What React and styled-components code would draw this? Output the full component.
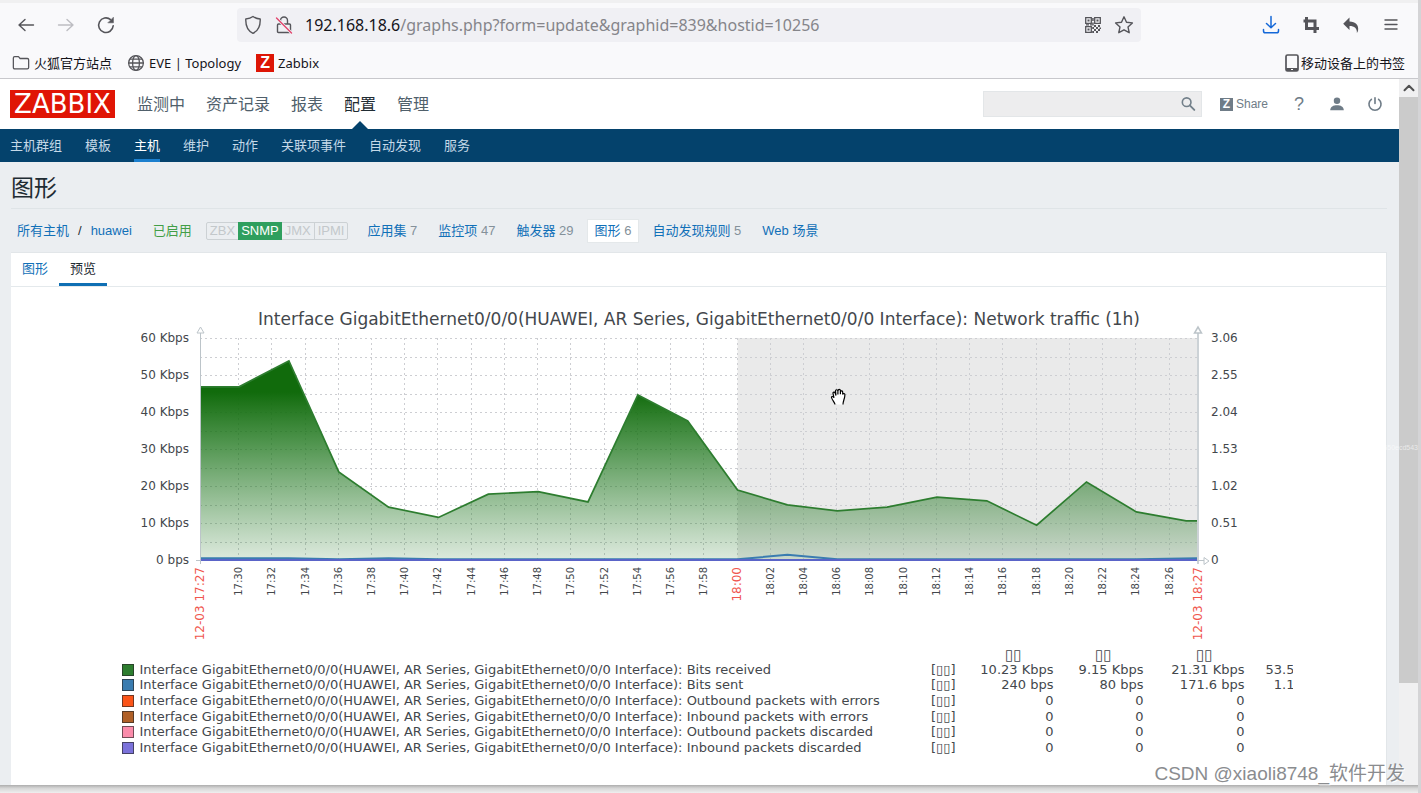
import React from "react";
import styled, { createGlobalStyle } from "styled-components";

const CJK = `"Noto Sans CJK SC", sans-serif`;

const bookmarks = [
  { label: "火狐官方站点", icon: "folder" },
  { label: "EVE | Topology", icon: "globe" },
  { label: "Zabbix", icon: "zabbix" },
];

const mainMenu = ["监测中", "资产记录", "报表", "配置", "管理"];
const subMenu = [
  "主机群组",
  "模板",
  "主机",
  "维护",
  "动作",
  "关联项事件",
  "自动发现",
  "服务",
];

const hostLinks = [
  { label: "应用集", count: 7 },
  { label: "监控项", count: 47 },
  { label: "触发器", count: 29 },
  { label: "图形", count: 6, active: true },
  { label: "自动发现规则", count: 5 },
  { label: "Web 场景" },
];

const ITEM_PREFIX =
  "Interface GigabitEthernet0/0/0(HUAWEI, AR Series, GigabitEthernet0/0/0 Interface): ";

const legend = [
  { name: "Bits received", color: "#2d7d2f", values: ["10.23 Kbps", "9.15 Kbps", "21.31 Kbps", "53.5"] },
  { name: "Bits sent", color: "#3a7cb0", values: ["240 bps", "80 bps", "171.6 bps", "1.1"] },
  { name: "Outbound packets with errors", color: "#fb5418", values: ["0", "0", "0", ""] },
  { name: "Inbound packets with errors", color: "#b06027", values: ["0", "0", "0", ""] },
  { name: "Outbound packets discarded", color: "#fb8cab", values: ["0", "0", "0", ""] },
  { name: "Inbound packets discarded", color: "#7b72da", values: ["0", "0", "0", ""] },
];

// [minutes after 17:00, Kbps]
const received = [
  [27.65, 46.8], [30, 46.8], [33, 53.8], [36, 23.8], [39, 14.3], [42, 11.5],
  [45, 17.8], [48, 18.5], [51, 15.7], [54, 44.6], [57, 37.6], [60, 18.9],
  [63, 14.9], [66, 13.3], [69, 14.3], [72, 17], [75, 16], [78, 9.4],
  [81, 21.1], [84, 13], [87, 10.6], [87.65, 10.6],
];
const sent = [
  [27.65, 0.5], [33, 0.5], [36, 0.2], [39, 0.5], [42, 0.2], [60, 0.2],
  [63, 1.4], [66, 0.2], [84, 0.2], [87.65, 0.5],
];

const LEFT = 95;
const RIGHT = 1092;
const TOP = 38;
const BOTTOM = 260;
const START = 27.65;
const px = (min) => LEFT + ((min - START) * (RIGHT - LEFT)) / 60;
const py = (kbps) => BOTTOM - (kbps * (BOTTOM - TOP)) / 60;
const toPoints = (data) => data.map(([m, v]) => `${px(m)},${py(v)}`).join(" ");

const clock = (min) => {
  const h = 17 + Math.floor(min / 60);
  return `${h}:${String(min % 60).padStart(2, "0")}`;
};

const Icon = ({ size = 20, children, ...rest }) => (
  <svg
    width={size}
    height={size}
    viewBox="0 0 20 20"
    fill="none"
    stroke="currentColor"
    strokeWidth="1.4"
    strokeLinecap="round"
    strokeLinejoin="round"
    aria-hidden="true"
    {...rest}
  >
    {children}
  </svg>
);

const BookmarkIcon = ({ type }) => {
  if (type === "zabbix") return <ZBadge>Z</ZBadge>;
  if (type === "globe")
    return (
      <Icon size={18}>
        <circle cx="10" cy="10" r="8.2" />
        <ellipse cx="10" cy="10" rx="3.8" ry="8.2" />
        <path d="M2 10h16M3.4 5.6h13.2M3.4 14.4h13.2" />
      </Icon>
    );
  return (
    <Icon size={18}>
      <path d="M1.5 4.5c0-.9.6-1.5 1.5-1.5h4.2l1.8 2h8c.9 0 1.5.6 1.5 1.5V15c0 .9-.6 1.5-1.5 1.5H3c-.9 0-1.5-.6-1.5-1.5z" />
    </Icon>
  );
};

const QrIcon = () => (
  <svg width="16" height="16" viewBox="0 0 16 16" fill="none" stroke="currentColor" strokeWidth="1.3" aria-hidden="true">
    <path d="M.7.7h5.6v5.6H.7zM9.7.7h5.6v5.6H9.7zM.7 9.7h5.6v5.6H.7z" />
    <path
      fill="currentColor"
      stroke="none"
      d="M2.5 2.5h2v2h-2zM11.5 2.5h2v2h-2zM2.5 11.5h2v2h-2zM7.2 1h1.5v3H7.2zM7.2 5.5h1.5v3H7.2zM1 7.2h3v1.4H1zM5 7.2h2v1.4H5zM9 8h2v2H9zM13 8h2v2h-2zM11 10h2v2h-2zM7.2 10h1.8v2H7.2zM9 12h2v2H9zM13 12h2v2h-2zM11 14h2v2h-2zM7.2 14h1.8v2H7.2zM14.5 10.5H16v1.5h-1.5z"
    />
  </svg>
);

const BrowserBar = () => (
  <Chrome>
    <Toolbar>
      <NavButtons>
        <ToolButton aria-label="后退">
          <Icon><path d="M17.5 10H3M9 4.5L3 10l6 5.500" /></Icon>
        </ToolButton>
        <ToolButton aria-label="前进" $color="#bdbdc2">
          <Icon><path d="M2.500 10H17M11 4.500l6 5.500-6 5.500" /></Icon>
        </ToolButton>
        <ToolButton aria-label="刷新">
          <Icon strokeWidth="1.6">
            <path d="M17.2 10.8A7.3 7.3 0 1 1 14.6 4.6" />
            <path d="M17.4 2.6v5.2h-5.2z" fill="currentColor" strokeWidth="0.6" />
          </Icon>
        </ToolButton>
      </NavButtons>
      <AddressBar>
        <Icon><path d="M10 1.5c2 1.6 4.5 2.3 7.2 2.5.3 6.8-2.2 11.9-7.2 14.3C5 15.9 2.500 10.800 2.800 4 5.500 3.800 8 3.100 10 1.500z" /></Icon>
        <Icon>
          <path d="M6.500 9V5.500a3.500 3.500 0 0 1 7 0V9M4.500 9h11c.6 0 1 .4 1 1v6.500c0 .6-.4 1-1 1h-11c-.6 0-1-.4-1-1V10c0-.6.4-1 1-1z" />
          <path d="M2.500 3l15 15" stroke="#f0f0f4" strokeWidth="3" />
          <path d="M2.500 3l15 15" stroke="#e2446c" />
        </Icon>
        <Url role="textbox" aria-label="地址栏" tabIndex={0}>
          <b>192.168.18.6</b>/graphs.php?form=update&amp;graphid=839&amp;hostid=10256
        </Url>
        <ToolButton aria-label="二维码" $small><QrIcon /></ToolButton>
        <ToolButton aria-label="添加书签" $small>
          <Icon><path d="M10 1.800l2.500 5.400 5.900.7-4.400 4 1.200 5.800L10 14.800l-5.200 2.900L6 11.900l-4.400-4 5.900-.7z" /></Icon>
        </ToolButton>
      </AddressBar>
      <Extensions>
        <ToolButton aria-label="下载" $color="#1468d8">
          <Icon strokeWidth="1.500"><path d="M10 1.500v11M5.500 8.500l4.500 4.300 4.500-4.300M2.500 14.500v1.400c0 1 .8 1.800 1.800 1.800h11.400c1 0 1.800-.8 1.800-1.800v-1.400" /></Icon>
        </ToolButton>
        <ToolButton aria-label="截图">
          <Icon strokeWidth="3" strokeLinecap="butt" strokeLinejoin="miter"><path d="M5.500 2v11.500H18M2.500 6h11.500V18" /></Icon>
        </ToolButton>
        <ToolButton aria-label="撤销">
          <Icon stroke="none"><path fill="currentColor" d="M8.500 2.500v4c6 0 9.500 3.500 8.600 8.800-.2 1.200-.6 2-1.200 2.700.3-4.700-2.400-7-7.400-7v4L2.200 8.800z" /></Icon>
        </ToolButton>
        <ToolButton aria-label="菜单">
          <Icon><path d="M4 5h12M4 9.500h12M4 14h12" /></Icon>
        </ToolButton>
      </Extensions>
    </Toolbar>
    <BookmarkBar>
      {bookmarks.map((b) => (
        <Bookmark href="#" key={b.label}>
          <BookmarkIcon type={b.icon} />
          {b.label}
        </Bookmark>
      ))}
      <MobileBookmark href="#">
        <svg width="14" height="18" viewBox="0 0 14 18" aria-hidden="true">
          <rect x="1" y="1" width="12" height="16" rx="1.500" fill="none" stroke="#55555a" strokeWidth="1.700" />
          <path d="M1 14h12v3H1z" fill="#55555a" />
          <path d="M6 15.500h2" stroke="#fff" />
        </svg>
        移动设备上的书签
      </MobileBookmark>
    </BookmarkBar>
  </Chrome>
);

const Header = () => (
  <TopBar>
    <Logo href="#">ZABBIX</Logo>
    <MainNav>
      {mainMenu.map((item) => (
        <MainLink href="#" key={item} $active={item === "配置"}>
          {item}
        </MainLink>
      ))}
    </MainNav>
    <Search>
      <SearchInput type="text" aria-label="搜索" />
      <SearchButton aria-label="搜索">
        <Icon size={18} strokeWidth="1.800">
          <circle cx="8.500" cy="8" r="4.800" />
          <path d="M12 11.500l5 5" strokeWidth="2.200" />
        </Icon>
      </SearchButton>
    </Search>
    <Share href="#">
      <ZBadge $share>Z</ZBadge>
      Share
    </Share>
    <UserLinks>
      <UserLink href="#" aria-label="帮助">?</UserLink>
      <UserLink href="#" aria-label="用户">
        <Icon size={18} stroke="none">
          <circle cx="10" cy="6.500" r="3.600" fill="currentColor" />
          <path d="M2.500 17c0-4 3.500-5.500 7.500-5.500s7.500 1.500 7.500 5.500z" fill="currentColor" />
        </Icon>
      </UserLink>
      <UserLink href="#" aria-label="退出">
        <Icon size={18} strokeWidth="1.800"><path d="M10 3v6.500M6 4.800a6.700 6.700 0 1 0 8 0" /></Icon>
      </UserLink>
    </UserLinks>
  </TopBar>
);

const TrafficChart = () => {
  const minutes = [];
  for (let m = 30; m <= 86; m += 2) minutes.push(m);
  const steps = Array.from({ length: 13 }, (_, i) => i * 5);
  const left = ["0 bps", "10 Kbps", "20 Kbps", "30 Kbps", "40 Kbps", "50 Kbps", "60 Kbps"];
  const right = ["0", "0.51", "1.02", "1.53", "2.04", "2.55", "3.06"];
  return (
    <Chart viewBox="0 0 1188 348" role="img" aria-label="Network traffic">
      <defs>
        <linearGradient id="area" gradientUnits="userSpaceOnUse" x1="0" y1="92" x2="0" y2={BOTTOM}>
          <stop offset="0" stopColor="#116b0c" />
          <stop offset="0.3" stopColor="#1d761b" stopOpacity="0.78" />
          <stop offset="1" stopColor="#2d7d2f" stopOpacity="0.16" />
        </linearGradient>
      </defs>
      <text x="594" y="25" fontSize="17" textAnchor="middle">
        {ITEM_PREFIX}Network traffic (1h)
      </text>
      <rect x={px(60)} y={TOP} width={RIGHT - px(60)} height={BOTTOM - TOP} fill="#eaeaea" />
      <g stroke="#cdced2" strokeDasharray="2 3">
        {steps.map((s) => (
          <line key={s} x1={LEFT} x2={RIGHT} y1={Math.round(py(s)) + 0.5} y2={Math.round(py(s)) + 0.5} />
        ))}
        {minutes.map((m) => (
          <line key={m} x1={Math.round(px(m)) - 0.5} x2={Math.round(px(m)) - 0.5} y1={TOP} y2={BOTTOM} />
        ))}
      </g>
      <polygon fill="url(#area)" points={`${LEFT},${BOTTOM} ${toPoints(received)} ${RIGHT},${BOTTOM}`} />
      <polyline fill="none" stroke="#2d7d2f" strokeWidth="1.700" points={toPoints(received)} />
      <polyline fill="none" stroke="#3a7cb0" strokeWidth="2" points={toPoints(sent)} />
      <line x1={LEFT} x2={RIGHT} y1={BOTTOM} y2={BOTTOM} stroke="#5a64c8" strokeWidth="2" />
      <g fill="#fff" stroke="#bcc4c9">
        <path d="M95.500 264V33M92 33h7l-3.500-6z" />
        <path d="M1093 264V33M1089.500 33h7l-3.500-6z" strokeWidth="1.500" />
        <path d="M91 260.500h4M1092 260.500h7M1099 257.500v7l5-3.500z" />
      </g>
      <g fontSize="12">
        {left.map((label, i) => (
          <text key={label} x="84" y={py(i * 10) + 4} textAnchor="end">{label}</text>
        ))}
        {right.map((label, i) => (
          <text key={label} x="1106" y={py(i * 10) + 4}>{label}</text>
        ))}
      </g>
      {minutes.map((m) => (
        <TimeLabel key={m} $major={m === 60} transform={`translate(${Math.round(px(m)) + 3} 267) rotate(-90)`}>
          {clock(m)}
        </TimeLabel>
      ))}
      <TimeLabel $major transform="translate(99 267) rotate(-90)">12-03 17:27</TimeLabel>
      <TimeLabel $major transform="translate(1097 267) rotate(-90)">12-03 18:27</TimeLabel>
    </Chart>
  );
};

const Legend = () => (
  <LegendClip>
    <LegendTable>
      <colgroup>
        <col width="808" />
        <col width="26" />
        <col width="98" />
        <col width="90" />
        <col width="101" />
        <col width="50" />
      </colgroup>
      <thead>
        <tr>
          <th />
          <th />
          <th>▯▯</th>
          <th>▯▯</th>
          <th>▯▯</th>
          <th />
        </tr>
      </thead>
      <tbody>
        {legend.map((row) => (
          <tr key={row.name}>
            <td>
              <ItemName>
                <Swatch $color={row.color} />
                {ITEM_PREFIX}
                {row.name}
              </ItemName>
            </td>
            <td>[▯▯]</td>
            {row.values.map((v, i) => (
              <td key={i}>{v}</td>
            ))}
          </tr>
        ))}
      </tbody>
    </LegendTable>
  </LegendClip>
);

// open hand shown while hovering over the graph
const HandCursor = () => (
  <Hand width="18" height="18" viewBox="0 0 18 18" aria-hidden="true">
    <path
      d="M5 16.500c0-2-3-4.500-3.500-7 0-1.300 1.500-1.500 2.500.3L3 5.500C2.700 4 4.600 3.500 5.200 5l.6 1.500L5.500 3c0-1.600 2.200-1.700 2.400 0L8.200 2c.3-1.300 2.100-1 2.200.3l.2 1.200c.5-1.200 2-.8 2.100.6v2c.5-1.200 2.200-1 2.200.5 0 4-1.900 6-1.900 9.900z"
      fill="#fff"
    />
    <path
      d="M5 16.500c0-2-3-4.500-3.500-7 0-1.300 1.500-1.500 2.500.3L3 5.500C2.700 4 4.600 3.500 5.200 5l.8 2.500L5.500 3c0-1.600 2.200-1.700 2.400 0v3.500M8 3c.2-2 2.300-2 2.400-.3v3.500M10.600 3.500c.5-1.200 2-.8 2.100.6v2.500c.5-1.600 2.200-1.400 2.200.1 0 4-1.900 6-1.900 9.800"
      fill="none"
      stroke="#000"
      strokeWidth="1.200"
    />
  </Hand>
);

const App = () => {
  return (
    <Window>
      <GlobalStyle />
      <BrowserBar />
      <Viewport>
        <Page>
          <Header />
          <SubNav>
            {subMenu.map((item) => (
              <SubLink href="#" key={item} $active={item === "主机"}>
                {item}
              </SubLink>
            ))}
          </SubNav>
          <Main>
            <Title>图形</Title>
            <HostBar>
              <HostPath>
                <a href="#">所有主机</a>
                <span>/</span>
                <a href="#">huawei</a>
              </HostPath>
              <Enabled>已启用</Enabled>
              <Interfaces>
                <Interface>ZBX</Interface>
                <Interface $on>SNMP</Interface>
                <Interface>JMX</Interface>
                <Interface $divided>IPMI</Interface>
              </Interfaces>
              {hostLinks.map((link) => (
                <HostLink href="#" key={link.label} $active={link.active}>
                  {link.label}
                  {link.count && <Count> {link.count}</Count>}
                </HostLink>
              ))}
            </HostBar>
            <Panel>
              <Tabs role="tablist">
                <Tab role="tab" aria-selected="false">图形</Tab>
                <Tab role="tab" aria-selected="true" $active>预览</Tab>
              </Tabs>
              <GraphBox>
                <TrafficChart />
                <Legend />
                <HandCursor />
              </GraphBox>
            </Panel>
          </Main>
        </Page>
        <Scrollbar>
          <Icon size={18} strokeWidth="2.200" stroke="#505050"><path d="M5 12.500l5-5 5 5" /></Icon>
          <Thumb />
        </Scrollbar>
        <SideMark>650ecd543</SideMark>
      </Viewport>
      <BottomEdge />
      <Watermark>CSDN @xiaoli8748_软件开发</Watermark>
    </Window>
  );
};

export default App;

const GlobalStyle = createGlobalStyle`
  * {
    box-sizing: border-box;
  }
  body {
    margin: 0;
    background: #fff;
    font-family: "Liberation Sans", ${CJK};
    font-size: 13px;
    color: #1f2c33;
  }
  a {
    color: #1170b8;
    text-decoration: none;
  }
  button {
    border: 0;
    padding: 0;
    background: none;
    color: inherit;
    font: inherit;
  }
  svg {
    flex: none;
    display: block;
  }
`;

const Window = styled.div`
  position: relative;
  height: 100vh;
  display: flex;
  flex-direction: column;
  overflow: hidden;
  border-right: 3px solid #d4d4d6;
`;

const Chrome = styled.div`
  flex: none;
  background: #f9f9fb;
  border-top: 3px solid #f0f0f1;
  border-bottom: 1px solid #c8c8cc;
  font-family: "Noto Sans", ${CJK};
  color: #55555a;
`;

const Toolbar = styled.div`
  display: flex;
  align-items: center;
  height: 44px;
`;

const NavButtons = styled.div`
  display: flex;
  gap: 20px;
  width: 237px;
  padding-left: 16px;
`;

const ToolButton = styled.button`
  display: flex;
  align-items: center;
  justify-content: center;
  width: ${(p) => (p.$small ? "31px" : "20px")};
  height: 20px;
  color: ${(p) => p.$color || "#55555a"};
`;

const AddressBar = styled.div`
  flex: 1;
  display: flex;
  align-items: center;
  gap: 11px;
  height: 34px;
  padding: 0 2px 0 6px;
  border-radius: 4px;
  background: #f0f0f4;

  button + button {
    margin-left: -11px;
  }
`;

const Url = styled.div`
  flex: 1;
  font-size: 16px;
  line-height: 22px;
  color: #85858a;
  white-space: nowrap;
  overflow: hidden;

  b {
    font-weight: 400;
    color: #15141a;
  }
`;

const Extensions = styled.div`
  display: flex;
  justify-content: flex-end;
  gap: 20px;
  width: 277px;
  padding-right: 17px;
`;

const BookmarkBar = styled.div`
  display: flex;
  align-items: center;
  gap: 15px;
  height: 31px;
  padding: 0 13px 0 12px;
`;

const Bookmark = styled.a`
  display: flex;
  align-items: center;
  gap: 4px;
  font-size: 13px;
  line-height: 20px;
  color: #15141a;

  svg {
    color: #55555a;
  }
`;

const MobileBookmark = styled(Bookmark)`
  gap: 2px;
  margin-left: auto;
`;

const ZBadge = styled.span`
  display: flex;
  align-items: center;
  justify-content: center;
  width: ${(p) => (p.$share ? "13px" : "18px")};
  height: ${(p) => (p.$share ? "13px" : "18px")};
  background: ${(p) => (p.$share ? "#6f7c87" : "#dd1505")};
  color: #fff;
  font: bold ${(p) => (p.$share ? "12px" : "16px")} "Liberation Sans", sans-serif;
`;

const Viewport = styled.div`
  position: relative;
  flex: 1;
  min-height: 0;
  display: flex;
`;

const Page = styled.div`
  flex: 1;
  display: flex;
  flex-direction: column;
  overflow: hidden;
  background: #ebeef1;
`;

const TopBar = styled.header`
  flex: none;
  display: flex;
  align-items: center;
  height: 50px;
  padding: 0 15px 0 10px;
  background: #fff;
`;

const Logo = styled.a`
  width: 105px;
  height: 28px;
  background: #e01505;
  color: #fff;
  font-family: "DejaVu Sans", sans-serif;
  font-size: 26px;
  line-height: 28px;
  text-align: center;
`;

const MainNav = styled.nav`
  flex: 1;
  display: flex;
  gap: 21px;
  padding-left: 22px;
`;

const MainLink = styled.a`
  position: relative;
  padding-top: 1px;
  font-size: 16px;
  line-height: 49px;
  color: ${(p) => (p.$active ? "#1f2c33" : "#50606b")};

  &::after {
    content: "";
    display: ${(p) => (p.$active ? "block" : "none")};
    position: absolute;
    left: 50%;
    bottom: 0;
    margin-left: -8px;
    border: 8px solid transparent;
    border-top: 0;
    border-bottom-color: #04426c;
  }
`;

const Search = styled.div`
  display: flex;
  width: 219px;
  height: 26px;
  background: #ededee;
  border: 1px solid #e3e6e8;
`;

const SearchInput = styled.input`
  flex: 1;
  min-width: 0;
  border: 0;
  padding: 0 6px;
  background: none;
  font-size: 13px;
`;

const SearchButton = styled.button`
  display: flex;
  align-items: center;
  justify-content: center;
  width: 26px;
  color: #73808a;
`;

const Share = styled.a`
  display: flex;
  align-items: center;
  gap: 3px;
  margin-left: 18px;
  font-size: 12px;
  color: #6f7c87;
`;

const UserLinks = styled.div`
  display: flex;
  gap: 20px;
  margin-left: 22px;
`;

const UserLink = styled.a`
  display: flex;
  align-items: center;
  justify-content: center;
  width: 18px;
  height: 20px;
  font-size: 18px;
  color: #6f7c87;
`;

const SubNav = styled.nav`
  flex: none;
  display: flex;
  gap: 23px;
  height: 33px;
  padding-left: 10px;
  background: #04426c;
`;

const SubLink = styled.a`
  padding-top: 2px;
  font-size: 13px;
  line-height: 30px;
  color: ${(p) => (p.$active ? "#fff" : "#c5d9e8")};
  border-bottom: 3px solid ${(p) => (p.$active ? "#1b7fce" : "transparent")};
`;

const Main = styled.main`
  flex: 1;
  display: flex;
  flex-direction: column;
  padding: 0 12px 0 11px;
`;

const Title = styled.h1`
  margin: 0;
  padding: 10px 0 4px;
  font-size: 23px;
  font-weight: 400;
  line-height: 32px;
  border-bottom: 1px solid #dfe4e7;
`;

const HostBar = styled.div`
  display: flex;
  align-items: center;
  gap: 7px;
  height: 43px;
  padding-left: 6px;
`;

const HostPath = styled.div`
  display: flex;
  align-items: baseline;
  gap: 9px;
  line-height: 22px;
`;

const Enabled = styled.span`
  margin-left: 14px;
  line-height: 22px;
  color: #429e47;
`;

const Interfaces = styled.div`
  display: flex;
  height: 18px;
  margin: 0 5px 0 7px;
  border: 1px solid #ccd1d4;
  border-radius: 2px;
`;

const Interface = styled.span`
  padding: 0 3px;
  margin: ${(p) => (p.$on ? "-1px 0" : "0")};
  line-height: ${(p) => (p.$on ? "18px" : "16px")};
  color: ${(p) => (p.$on ? "#fff" : "#c3c8cb")};
  background: ${(p) => (p.$on ? "#2f9f5e" : "none")};
  border-left: ${(p) => (p.$divided ? "1px solid #ccd1d4" : "0")};
`;

const HostLink = styled.a`
  padding: 0 7px;
  line-height: 22px;
  background: ${(p) => (p.$active ? "#fff" : "none")};
  box-shadow: ${(p) => (p.$active ? "0 0 0 1px #e4e8ea" : "none")};
  white-space: pre;
`;

const Count = styled.span`
  color: #84919a;
`;

const Panel = styled.section`
  flex: 1;
  background: #fff;
  border: 1px solid #e2e6e9;
  border-width: 1px 1px 0 0;
`;

const Tabs = styled.div`
  display: flex;
  height: 34px;
  border-bottom: 1px solid #e4e9ec;
`;

const Tab = styled.button`
  padding: 2px 11px 0;
  line-height: 28px;
  color: ${(p) => (p.$active ? "#1f2c33" : "#1170b8")};
  border-bottom: 3px solid ${(p) => (p.$active ? "#0f6fb4" : "transparent")};
`;

const GraphBox = styled.div`
  position: relative;
  max-width: 1188px;
  margin: 13px auto 0;
  font-family: "DejaVu Sans", sans-serif;
  color: #43474c;
`;

const Chart = styled.svg`
  width: 100%;

  text {
    fill: #43474c;
  }
`;

const TimeLabel = styled.text`
  && {
    fill: ${(p) => (p.$major ? "#f0564e" : "#43474c")};
  }
  font-size: ${(p) => (p.$major ? "12px" : "10px")};
  text-anchor: end;
`;

const LegendClip = styled.div`
  overflow: hidden;
  padding-left: 17px;
`;

const LegendTable = styled.table`
  table-layout: fixed;
  width: 1173px;
  height: 108px;
  border-collapse: collapse;
  font-size: 13px;
  line-height: 14px;

  th,
  td {
    padding: 0;
    font-weight: 400;
    text-align: right;
    white-space: nowrap;
  }
  th {
    height: 14px;
    padding-right: 32px;
    font-size: 15px;
  }
`;

const ItemName = styled.span`
  display: flex;
  align-items: center;
  gap: 6px;
  white-space: pre;
`;

const Swatch = styled.i`
  width: 12px;
  height: 12px;
  border: 1px solid rgba(40, 40, 40, 0.65);
  background: ${(p) => p.$color};
`;

const Hand = styled.svg`
  position: absolute;
  left: 725px;
  top: 88px;
`;

const Scrollbar = styled.div`
  display: flex;
  flex-direction: column;
  align-items: center;
  width: 19px;
  background: #f0f0f1;
`;

const Thumb = styled.div`
  width: 100%;
  height: 83%;
  background: #cbcbcb;
`;

const SideMark = styled.span`
  position: absolute;
  right: 0;
  top: 365px;
  font-size: 7px;
  color: rgba(255, 255, 255, 0.6);
`;

const BottomEdge = styled.div`
  flex: none;
  height: 8px;
  background: linear-gradient(#adadad, #d6d6d6 40%, #efefef);
`;

const Watermark = styled.div`
  position: absolute;
  right: 13px;
  bottom: 6px;
  font-size: 19px;
  line-height: 26px;
  color: #8a8c8f;
  text-shadow: 1px 1px 0 #fff;
`;
